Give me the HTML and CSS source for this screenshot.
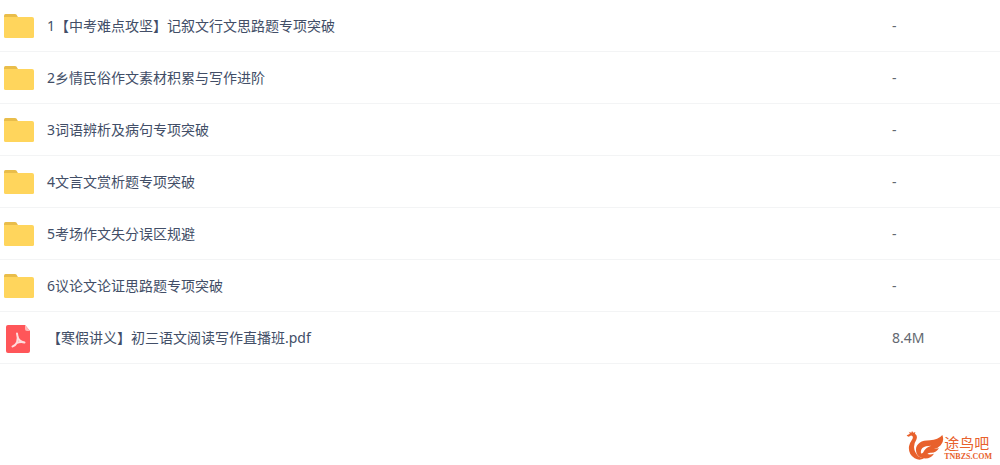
FILE: index.html
```html
<!DOCTYPE html>
<html lang="zh-CN">
    <head>
        <meta charset="UTF-8" />
        <meta name="viewport" content="width=device-width, initial-scale=1.0" />
        <title>途鸟吧</title>
        <link rel="stylesheet" href="styles.css">
    </head>
    <body>
        <svg class="sprite" aria-hidden="true">
            <symbol id="folder" viewBox="0 0 30 30">
                <path fill="#e9bd4a" d="M0 4.500Q0 3 1.500 3H11q1 0 1.600.8L14.500 7v4H0z" />
                <path fill="#ffd55c" d="M0 6h28q2 0 2 2v17.500q0 1.500-1.500 1.500h-27Q0 27 0 25.500z" />
            </symbol>
            <symbol id="pdf" viewBox="0 -1 30 30">
                <path fill="#ff5659" d="M4 1h17l5 6v20q0 2-2 2H4q-2 0-2-2V3q0-2 2-2z" />
                <path fill="#ffb7b8" d="M21 1l5 6h-3q-2 0-2-2z" />
                <path fill="none" stroke="#ffdcdc" stroke-width="2" stroke-linecap="round" stroke-linejoin="round" d="M13 9.500q1.500 4.500 0 9q-2 3.500-4.500 4M13.500 12q.5 5 7 6.500M12.500 19q4-1.500 8-.5" />
            </symbol>
        </svg>
        <main>
            <table class="files">
                <tbody>
                    <tr>
                        <td class="icon"><svg><use href="#folder" /></svg></td>
                        <td class="name">1【中考难点攻坚】记叙文行文思路题专项突破</td>
                        <td class="size">-</td>
                    </tr>
                    <tr>
                        <td class="icon"><svg><use href="#folder" /></svg></td>
                        <td class="name">2乡情民俗作文素材积累与写作进阶</td>
                        <td class="size">-</td>
                    </tr>
                    <tr>
                        <td class="icon"><svg><use href="#folder" /></svg></td>
                        <td class="name">3词语辨析及病句专项突破</td>
                        <td class="size">-</td>
                    </tr>
                    <tr>
                        <td class="icon"><svg><use href="#folder" /></svg></td>
                        <td class="name">4文言文赏析题专项突破</td>
                        <td class="size">-</td>
                    </tr>
                    <tr>
                        <td class="icon"><svg><use href="#folder" /></svg></td>
                        <td class="name">5考场作文失分误区规避</td>
                        <td class="size">-</td>
                    </tr>
                    <tr>
                        <td class="icon"><svg><use href="#folder" /></svg></td>
                        <td class="name">6议论文论证思路题专项突破</td>
                        <td class="size">-</td>
                    </tr>
                    <tr>
                        <td class="icon"><svg><use href="#pdf" /></svg></td>
                        <td class="name">【寒假讲义】初三语文阅读写作直播班.pdf</td>
                        <td class="size">8.4M</td>
                    </tr>
                </tbody>
            </table>
        </main>
        <footer>
            <div class="brand">
                <svg class="bird" viewBox="4 6 114 90" fill="#e8612c" aria-hidden="true">
                    <path d="M6 19Q13 18 16 13L12 8L20 11L22 6L26 11L32 9L31 14Q40 20 35 32Q28 42 28 54Q29 72 43 83Q52 88 62 85Q47 98 30 88Q10 76 13 52Q15 42 21 34Q27 26 23 21Q19 18 15 22Q10 25 6 19z" />
                    <path d="M37 76Q28 53 45 41Q56 34 76 34Q100 33 113 18Q120 36 108 49Q101 58 88 59Q97 60 103 57Q95 72 78 71Q72 71 68 75Q77 78 88 74Q77 91 57 88Q43 86 37 76zM49 73Q55 75 58 66Q63 56 80 50Q62 50 53 57Q47 63 49 73z" fill-rule="evenodd" />
                </svg>
                <div class="brand-text">
                    <span class="brand-name">途鸟吧</span>
                    <span class="brand-site">TNBZS.COM</span>
                </div>
            </div>
        </footer>
    </body>
</html>
```

FILE: styles.css
```css
* {
    box-sizing: border-box;
}
body {
    display: flex;
    flex-direction: column;
    min-height: 100vh;
    margin: 0;
    background-color: #fff;
    font-family: 'Noto Sans', 'Noto Sans CJK SC', sans-serif;
    font-size: 14px;
    line-height: 20px;
}
.sprite {
    display: none;
}
.files {
    width: 100%;
    border-collapse: separate;
    border-spacing: 0;
}
.files td {
    height: 52px;
    padding: 0;
    border-bottom: 1px solid #f3f4f5;
    vertical-align: middle;
}
.files .icon {
    width: 47px;
    padding-left: 4px;
}
.icon svg {
    display: block;
    width: 30px;
    height: 30px;
}
.name {
    color: #424e67;
}
.files .size {
    width: 108px;
    color: #636870;
}
footer {
    display: flex;
    justify-content: flex-end;
    margin-top: auto;
    padding: 0 8px 4px;
}
.brand {
    display: flex;
    align-items: flex-end;
    color: #e8612c;
}
.bird {
    width: 38px;
    height: 30px;
}
.brand-text {
    display: flex;
    flex-direction: column;
    gap: 2px;
}
.brand-name {
    font-size: 15px;
    line-height: 16px;
}
.brand-site {
    font-family: 'Liberation Serif', serif;
    font-size: 8px;
    font-weight: bold;
    line-height: 8px;
}
```
